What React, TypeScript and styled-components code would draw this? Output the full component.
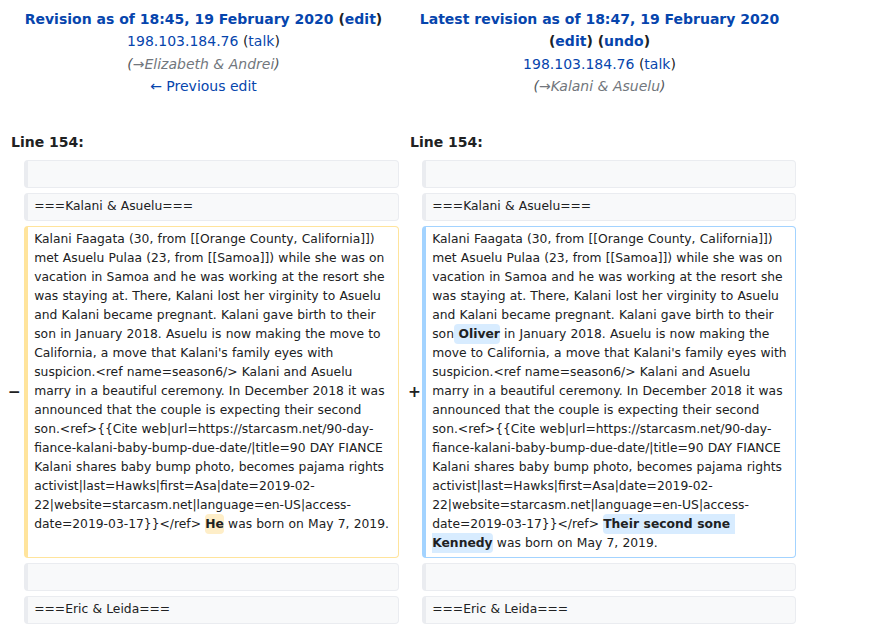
import React from "react";
import styled, { createGlobalStyle } from "styled-components";

const Global = createGlobalStyle`
  html, body { margin: 0; padding: 0; background: #ffffff; }
  body { font-family: "DejaVu Sans", sans-serif; color: #202122; }
`;

const Page = styled.div`
  padding: 8px 0 0 8px;
  width: 788px;
`;

const DiffGrid = styled.div`
  display: grid;
  grid-template-columns: 16px 375px 23px 374px;
  row-gap: 5px;
`;

const HeaderCell = styled.div<{ $shift?: number }>`
  grid-column: span 2;
  text-align: center;
  font-size: 14px;
  line-height: 22.4px;
  padding-left: ${(p) => p.$shift ?? 0}px;
`;

const Title = styled.div`
  font-weight: bold;
`;

const Link = styled.span`
  color: #0645ad;
`;

const Summary = styled.div`
  font-style: italic;
  color: #54595d;
`;

const AutoComment = styled.span`
  color: #72777d;
`;

const LineNo = styled.div<{ $indent: number }>`
  grid-column: span 2;
  font-weight: bold;
  font-size: 14px;
  line-height: 22px;
  padding-left: ${(p) => p.$indent}px;
  margin-top: 28px;
  margin-bottom: 2px;
`;

const Marker = styled.div<{ $pad: number }>`
  display: flex;
  align-items: center;
  justify-content: flex-end;
  padding-right: ${(p) => p.$pad}px;
  font-weight: bold;
  font-size: 15.4px;
  line-height: 18px;
`;

const Content = styled.div<{ $kind: "context" | "del" | "add" }>`
  box-sizing: border-box;
  border: 1px solid
    ${(p) => (p.$kind === "del" ? "#ffe49c" : p.$kind === "add" ? "#a3d3ff" : "#eaecf0")};
  border-left-width: 4px;
  border-radius: 4px;
  background: ${(p) => (p.$kind === "context" ? "#f8f9fa" : "#ffffff")};
  padding: 3.5px 4px 3.5px 6.2px;
  font-size: 12.32px;
  line-height: 19px;
  word-spacing: 0.3px;
  min-height: 28px;
  white-space: pre-wrap;
`;

const Change = styled.span<{ $kind: "del" | "add" }>`
  background: ${(p) => (p.$kind === "del" ? "#feeec8" : "#d8ecff")};
  font-weight: bold;
  border-radius: 4px;
  padding: 3px 0;
`;

const common1 = [
  "Kalani Faagata (30, from [[Orange County, California]])",
  "met Asuelu Pulaa (23, from [[Samoa]]) while she was on",
  "vacation in Samoa and he was working at the resort she",
  "was staying at. There, Kalani lost her virginity to Asuelu",
  "and Kalani became pregnant. Kalani gave birth to their",
].join("\n");

const common2 = [
  "suspicion.<ref name=season6/> Kalani and Asuelu",
  "marry in a beautiful ceremony. In December 2018 it was",
  "announced that the couple is expecting their second",
  "son.<ref>{{Cite web|url=https://starcasm.net/90-day-",
  "fiance-kalani-baby-bump-due-date/|title=90 DAY FIANCE",
  "Kalani shares baby bump photo, becomes pajama rights",
  "activist|last=Hawks|first=Asa|date=2019-02-",
  "22|website=starcasm.net|language=en-US|access-",
  "date=2019-03-17}}</ref> ",
].join("\n");

const ending = " was born on May 7, 2019.";

export default function App() {
  return (
    <>
      <Global />
      <Page>
        <DiffGrid>
          <HeaderCell>
            <Title>
              <Link>Revision as of 18:45, 19 February 2020</Link> (<Link>edit</Link>)
            </Title>
            <div>
              <Link>198.103.184.76</Link> (<Link>talk</Link>)
            </div>
            <Summary>
              (<AutoComment>→Elizabeth &amp; Andrei</AutoComment>)
            </Summary>
            <div>
              <Link>← Previous edit</Link>
            </div>
          </HeaderCell>
          <HeaderCell $shift={4}>
            <Title>
              <Link>Latest revision as of 18:47, 19 February 2020</Link>
            </Title>
            <Title>
              (<Link>edit</Link>) (<Link>undo</Link>)
            </Title>
            <div>
              <Link>198.103.184.76</Link> (<Link>talk</Link>)
            </div>
            <Summary>
              (<AutoComment>→Kalani &amp; Asuelu</AutoComment>)
            </Summary>
          </HeaderCell>

          <LineNo $indent={3}>Line 154:</LineNo>
          <LineNo $indent={11}>Line 154:</LineNo>

          <Marker $pad={3} />
          <Content $kind="context">{" "}</Content>
          <Marker $pad={1} />
          <Content $kind="context">{" "}</Content>

          <Marker $pad={3} />
          <Content $kind="context">===Kalani &amp; Asuelu===</Content>
          <Marker $pad={1} />
          <Content $kind="context">===Kalani &amp; Asuelu===</Content>

          <Marker $pad={3}>−</Marker>
          <Content $kind="del">
            {common1}
            {"\nson in January 2018. Asuelu is now making the move to\nCalifornia, a move that Kalani's family eyes with\n"}
            {common2}
            <Change $kind="del">He</Change>
            {ending}
          </Content>
          <Marker $pad={1}>+</Marker>
          <Content $kind="add">
            {common1}
            {"\nson"}
            <Change $kind="add"> Oliver</Change>
            {" in January 2018. Asuelu is now making the\nmove to California, a move that Kalani's family eyes with\n"}
            {common2}
            <Change $kind="add">{"Their second sone \nKennedy"}</Change>
            {ending}
          </Content>

          <Marker $pad={3} />
          <Content $kind="context">{" "}</Content>
          <Marker $pad={1} />
          <Content $kind="context">{" "}</Content>

          <Marker $pad={3} />
          <Content $kind="context">===Eric &amp; Leida===</Content>
          <Marker $pad={1} />
          <Content $kind="context">===Eric &amp; Leida===</Content>
        </DiffGrid>
      </Page>
    </>
  );
}
